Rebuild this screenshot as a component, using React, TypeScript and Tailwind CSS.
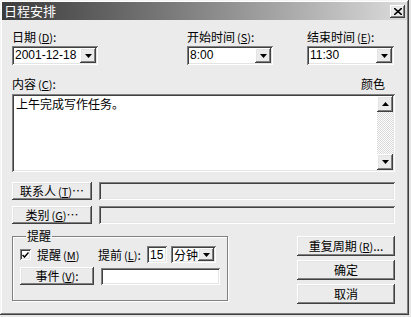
import type { ReactNode } from "react";

const raised =
  "shadow-[inset_-1px_-1px_#404040,inset_1px_1px_#ffffff,inset_-2px_-2px_#808080,inset_2px_2px_#e4e4e4]";
const sunken =
  "shadow-[inset_1px_1px_#808080,inset_-1px_-1px_#ffffff,inset_2px_2px_#404040,inset_-2px_-2px_#e4e4e4]";

function Key({ k }: { k: string }) {
  return (
    <span className="ml-[2px] text-[11px]">
      (<u>{k}</u>)
    </span>
  );
}

function Arrow({ up = false }: { up?: boolean }) {
  return (
    <svg width="7" height="4" viewBox="0 0 7 4">
      <path d={up ? "M0 4 L3.5 0 L7 4 Z" : "M0 0 L7 0 L3.5 4 Z"} fill="#000" />
    </svg>
  );
}

function DropButton() {
  return (
    <div className={`flex h-full w-[16px] shrink-0 items-center justify-center bg-[#ebebeb] ${raised}`}>
      <Arrow />
    </div>
  );
}

function Combo({ value, width }: { value: string; width: string }) {
  return (
    <div className={`flex h-[19px] items-center bg-white p-[2px] ${sunken} ${width}`}>
      <span className="flex-1 whitespace-nowrap pl-[1px] font-['Liberation_Sans',sans-serif] text-[12px] leading-[15px] text-black">
        {value}
      </span>
      <DropButton />
    </div>
  );
}

function Button({ children, className = "" }: { children: ReactNode; className?: string }) {
  return (
    <div
      className={`flex items-center justify-center whitespace-nowrap bg-[#ebebeb] text-[12px] leading-[14px] text-black ${raised} ${className}`}
    >
      {children}
    </div>
  );
}

export default function App() {
  return (
    <div className="h-[317px] w-[411px] bg-[#e6e6e6] font-['Noto_Sans_CJK_SC',sans-serif] text-black">
      <div className="flex h-[315px] w-[409px] flex-col bg-[#ebebeb] p-[2px] shadow-[inset_-1px_-1px_#404040,inset_1px_1px_#f4f4f4,inset_-2px_-2px_#808080,inset_2px_2px_#ffffff]">
        {/* title bar */}
        <div className="flex h-[18px] items-center justify-between bg-gradient-to-r from-[#3c3c3c] to-[#dcdcdc] pl-[2px] pr-[2px]">
          <span className="text-[13px] leading-[18px] text-white">日程安排</span>
          <div className={`flex h-[13px] w-[15px] items-center justify-center bg-[#ebebeb] ${raised}`}>
            <svg width="8" height="7" viewBox="0 0 8 7">
              <path d="M0 0 L8 7 M8 0 L0 7" stroke="#000" strokeWidth="1.6" />
            </svg>
          </div>
        </div>

        <div className="flex flex-1 flex-col pl-[10px] pr-[12px]">
          {/* time row */}
          <div className="mt-[10px] flex">
            <div className="w-[175px]">
              <div className="h-[14px] whitespace-nowrap text-[12px] leading-[14px]">
                日期<Key k="D" />:
              </div>
              <div className="mt-[2px]">
                <Combo value="2001-12-18" width="w-[86px]" />
              </div>
            </div>
            <div className="w-[120px]">
              <div className="h-[14px] whitespace-nowrap text-[12px] leading-[14px]">
                开始时间<Key k="S" />:
              </div>
              <div className="mt-[2px]">
                <Combo value="8:00" width="w-[86px]" />
              </div>
            </div>
            <div className="flex-1">
              <div className="h-[14px] whitespace-nowrap text-[12px] leading-[14px]">
                结束时间<Key k="E" />:
              </div>
              <div className="mt-[2px]">
                <Combo value="11:30" width="w-[87px]" />
              </div>
            </div>
          </div>

          {/* content */}
          <div className="mt-[12px] flex h-[14px] items-center justify-between pr-[10px] text-[12px] leading-[14px]">
            <span>
              内容<Key k="C" />:
            </span>
            <span>颜色</span>
          </div>
          <div className={`mt-[3px] flex h-[78px] bg-white p-[2px] ${sunken}`}>
            <div className="flex-1 pl-[2px] pt-[1px] text-[12px] leading-[14px]">上午完成写作任务。</div>
            <div className="flex w-[16px] flex-col">
              <div className={`flex h-[16px] items-center justify-center bg-[#ebebeb] ${raised}`}>
                <Arrow up />
              </div>
              <div className="flex-1 bg-[repeating-conic-gradient(#d8d8d8_0_25%,#ffffff_0_50%)] bg-[length:2px_2px]" />
              <div className={`flex h-[16px] items-center justify-center bg-[#ebebeb] ${raised}`}>
                <Arrow />
              </div>
            </div>
          </div>

          {/* contact / category */}
          <div className="mt-[10px] flex h-[18px] gap-[7px]">
            <Button className="w-[80px]">
              联系人<Key k="T" />…
            </Button>
            <div className={`flex-1 bg-[#ebebeb] ${sunken}`} />
          </div>
          <div className="mt-[6px] flex h-[18px] gap-[7px]">
            <Button className="w-[80px]">
              类别<Key k="G" />…
            </Button>
            <div className={`flex-1 bg-[#ebebeb] ${sunken}`} />
          </div>

          {/* bottom */}
          <div className="mt-[5px] flex justify-between">
            <fieldset className="h-[72px] w-[216px] border border-[#808080] pl-[7px] shadow-[inset_1px_1px_#ffffff,1px_1px_#ffffff]">
              <legend className="ml-[6px] px-[1px] text-[12px] leading-[14px]">提醒</legend>
              <div className="mt-[3px] flex h-[17px] items-center">
                <div className={`flex h-[11px] w-[11px] items-center justify-center bg-white ${sunken}`}>
                  <svg width="7" height="6" viewBox="0 0 7 6">
                    <path d="M0.5 3 L2.5 5 L6.5 0.5" stroke="#000" strokeWidth="1.5" fill="none" />
                  </svg>
                </div>
                <span className="ml-[6px] w-[61px] whitespace-nowrap text-[12px] leading-[14px]">
                  提醒<Key k="M" />
                </span>
                <span className="w-[49px] whitespace-nowrap text-[12px] leading-[14px]">
                  提前<Key k="L" />:
                </span>
                <div className={`flex h-[17px] w-[20px] items-center bg-white pl-[3px] ${sunken}`}>
                  <span className="font-['Liberation_Sans',sans-serif] text-[12px] leading-[14px]">15</span>
                </div>
                <div className={`ml-[4px] flex h-[17px] w-[45px] items-center bg-white p-[2px] ${sunken}`}>
                  <span className="flex-1 whitespace-nowrap pl-[1px] text-[12px] leading-[13px]">分钟</span>
                  <DropButton />
                </div>
              </div>
              <div className="mt-[4px] flex h-[18px] items-center">
                <Button className="h-[18px] w-[74px]">
                  事件<Key k="V" />:
                </Button>
                <div className={`ml-[7px] h-[17px] w-[119px] bg-white ${sunken}`} />
              </div>
            </fieldset>

            <div className="mt-[7px] flex w-[98px] flex-col gap-[4px]">
              <Button className="h-[20px]">
                重复周期<Key k="R" />...
              </Button>
              <Button className="h-[20px]">确定</Button>
              <Button className="h-[20px]">取消</Button>
            </div>
          </div>
        </div>
      </div>
    </div>
  );
}
